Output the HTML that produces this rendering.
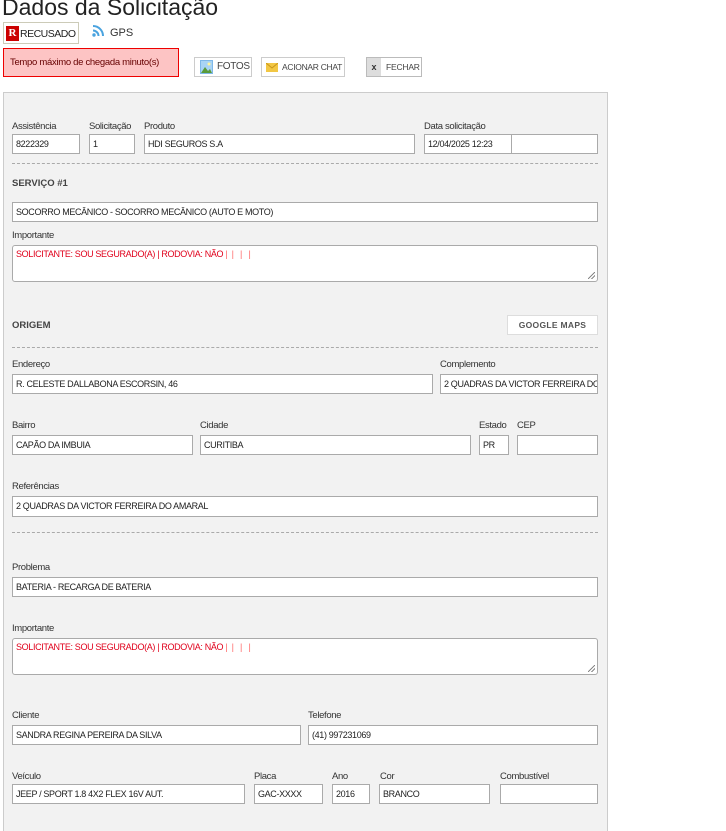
<!DOCTYPE html>
<html><head><meta charset="utf-8"><style>
*{box-sizing:border-box;margin:0;padding:0}
html,body{width:726px;height:831px;overflow:hidden}
body{background:#fff;font-family:"Liberation Sans",sans-serif;color:#333;position:relative}
.a{position:absolute;white-space:nowrap}
.lbl{position:absolute;font-size:9.5px;letter-spacing:-0.35px;color:#333;line-height:12px;white-space:nowrap}
.in{position:absolute;height:20px;background:#fff;border:1px solid #aaa;font-size:9px;letter-spacing:-0.35px;line-height:18px;padding-left:3px;color:#222;white-space:nowrap;overflow:hidden}
.ta{position:absolute;height:37px;background:#fff;border:1px solid #aaa;border-radius:3px;font-size:9px;letter-spacing:-0.35px;line-height:12px;padding:2px 3px;color:#e0001b;white-space:nowrap}
.dash{position:absolute;left:12px;width:586px;border-top:1px dashed #aaa;height:0}
.h{position:absolute;font-size:9.5px;font-weight:bold;color:#444}
.btn{position:absolute;height:20px;border:1px solid #ccc;background:#fff;font-size:9px;line-height:18px;color:#444;white-space:nowrap}
.grip{position:absolute;right:2px;bottom:2px;width:7px;height:7px;background:linear-gradient(135deg,transparent 45%,#888 45%,#888 55%,transparent 55%,transparent 70%,#888 70%,#888 80%,transparent 80%)}
</style></head><body>
<div class="a" style="left:2px;top:-7px;font-size:23px;color:#222;line-height:28px">Dados da Solicitação</div>
<div class="a" style="left:3px;top:22px;width:76px;height:22px;border:1px solid #cccbb8;background:#fff"></div>
<div class="a" style="left:6px;top:26px;width:13px;height:15px;background:#c00;color:#fff;font-size:11px;font-weight:bold;text-align:center;line-height:15px;font-family:'Liberation Serif',serif">R</div>
<div class="a" style="left:20px;top:27px;font-size:10.5px;letter-spacing:-0.5px;line-height:14px;color:#222">RECUSADO</div>
<svg class="a" style="left:92px;top:25px" width="13" height="12" viewBox="0 0 13 12"><circle cx="2" cy="10" r="1.7" fill="#4aa3df"/><path d="M1 5.5a5.5 5.5 0 0 1 5.5 5.5" stroke="#4aa3df" stroke-width="2" fill="none"/><path d="M1 1a10 10 0 0 1 10 10" stroke="#4aa3df" stroke-width="2" fill="none"/></svg>
<div class="a" style="left:110px;top:26px;font-size:11px;line-height:15px;color:#333">GPS</div>
<div class="a" style="left:3px;top:48px;width:176px;height:29px;border:1px solid #e00;background:#fdc4c4;font-size:9.5px;letter-spacing:-0.3px;line-height:27px;padding-left:6px;color:#600">Tempo máximo de chegada minuto(s)</div>
<div class="btn" style="left:194px;top:57px;width:58px"><svg class="a" style="left:5px;top:2px" width="13" height="14" viewBox="0 0 13 14"><rect width="13" height="14" fill="#7fb8e8"/><rect x="1" y="1" width="11" height="12" fill="#a9d4f5"/><path d="M1 13L5 7l3 4 2-2 2 4z" fill="#5a9b3a"/><circle cx="9" cy="4" r="1.5" fill="#fff59a"/></svg><span class="a" style="left:22px;top:0;font-size:10px;letter-spacing:-0.3px">FOTOS</span></div>
<div class="btn" style="left:261px;top:57px;width:84px"><svg class="a" style="left:4px;top:5px" width="12" height="9" viewBox="0 0 12 9"><rect width="12" height="9" fill="#f2c744"/><path d="M0 0l6 5 6-5" stroke="#c9961a" fill="none"/></svg><span class="a" style="left:20px;top:0;font-size:8.5px;letter-spacing:-0.3px">ACIONAR CHAT</span></div>
<div class="btn" style="left:366px;top:57px;width:56px;border-color:#bbb"><div class="a" style="left:0;top:0;width:14px;height:18px;background:#ddd;font-size:9px;font-weight:bold;text-align:center;color:#333">x</div><span class="a" style="left:19px;top:0;font-size:8.5px;letter-spacing:-0.2px">FECHAR</span></div>

<div class="a" style="left:3px;top:92px;width:605px;height:760px;background:#f2f2f2;border:1px solid #ccc"></div>

<div class="lbl" style="left:12px;top:121px">Assistência</div>
<div class="lbl" style="left:89px;top:121px">Solicitação</div>
<div class="lbl" style="left:144px;top:121px">Produto</div>
<div class="lbl" style="left:424px;top:121px">Data solicitação</div>
<div class="in" style="left:12px;top:134px;width:68px">8222329</div>
<div class="in" style="left:89px;top:134px;width:46px">1</div>
<div class="in" style="left:144px;top:134px;width:271px">HDI SEGUROS S.A</div>
<div class="in" style="left:424px;top:134px;width:88px">12/04/2025 12:23</div>
<div class="in" style="left:511px;top:134px;width:87px"></div>
<div class="dash" style="top:163px"></div>
<div class="h" style="left:12px;top:178px">SERVIÇO #1</div>
<div class="in" style="left:12px;top:202px;width:586px">SOCORRO MECÂNICO - SOCORRO MECÂNICO (AUTO E MOTO)</div>
<div class="lbl" style="left:12px;top:230px">Importante</div>
<div class="ta" style="left:12px;top:245px;width:586px">SOLICITANTE: SOU SEGURADO(A) | RODOVIA: NÃO <span style="color:#f66">| &nbsp;| &nbsp; | &nbsp; |</span><div class="grip"></div></div>
<div class="h" style="left:12px;top:320px">ORIGEM</div>
<div class="btn" style="left:507px;top:315px;width:91px;border-color:#ddd;font-weight:bold;font-size:8.5px;text-align:center;color:#555;letter-spacing:.3px">GOOGLE MAPS</div>
<div class="dash" style="top:347px"></div>
<div class="lbl" style="left:12px;top:359px">Endereço</div>
<div class="lbl" style="left:440px;top:359px">Complemento</div>
<div class="in" style="left:12px;top:374px;width:421px">R. CELESTE DALLABONA ESCORSIN, 46</div>
<div class="in" style="left:440px;top:374px;width:158px">2 QUADRAS DA VICTOR FERREIRA DO AMARAL</div>
<div class="lbl" style="left:12px;top:420px">Bairro</div>
<div class="lbl" style="left:200px;top:420px">Cidade</div>
<div class="lbl" style="left:479px;top:420px">Estado</div>
<div class="lbl" style="left:517px;top:420px">CEP</div>
<div class="in" style="left:12px;top:435px;width:181px">CAPÃO DA IMBUIA</div>
<div class="in" style="left:200px;top:435px;width:271px">CURITIBA</div>
<div class="in" style="left:479px;top:435px;width:30px">PR</div>
<div class="in" style="left:517px;top:435px;width:81px"></div>
<div class="lbl" style="left:12px;top:481px">Referências</div>
<div class="in" style="left:12px;top:496px;width:586px;height:21px">2 QUADRAS DA VICTOR FERREIRA DO AMARAL</div>
<div class="dash" style="top:532px"></div>
<div class="lbl" style="left:12px;top:562px">Problema</div>
<div class="in" style="left:12px;top:577px;width:586px">BATERIA - RECARGA DE BATERIA</div>
<div class="lbl" style="left:12px;top:623px">Importante</div>
<div class="ta" style="left:12px;top:638px;width:586px">SOLICITANTE: SOU SEGURADO(A) | RODOVIA: NÃO <span style="color:#f66">| &nbsp;| &nbsp; | &nbsp; |</span><div class="grip"></div></div>
<div class="lbl" style="left:12px;top:710px">Cliente</div>
<div class="lbl" style="left:308px;top:710px">Telefone</div>
<div class="in" style="left:12px;top:725px;width:289px">SANDRA REGINA PEREIRA DA SILVA</div>
<div class="in" style="left:308px;top:725px;width:290px">(41) 997231069</div>
<div class="lbl" style="left:12px;top:771px">Veículo</div>
<div class="lbl" style="left:254px;top:771px">Placa</div>
<div class="lbl" style="left:332px;top:771px">Ano</div>
<div class="lbl" style="left:380px;top:771px">Cor</div>
<div class="lbl" style="left:500px;top:771px">Combustível</div>
<div class="in" style="left:12px;top:784px;width:233px">JEEP / SPORT 1.8 4X2 FLEX 16V AUT.</div>
<div class="in" style="left:254px;top:784px;width:69px">GAC-XXXX</div>
<div class="in" style="left:332px;top:784px;width:38px">2016</div>
<div class="in" style="left:379px;top:784px;width:111px">BRANCO</div>
<div class="in" style="left:500px;top:784px;width:98px"></div>
</body></html>
